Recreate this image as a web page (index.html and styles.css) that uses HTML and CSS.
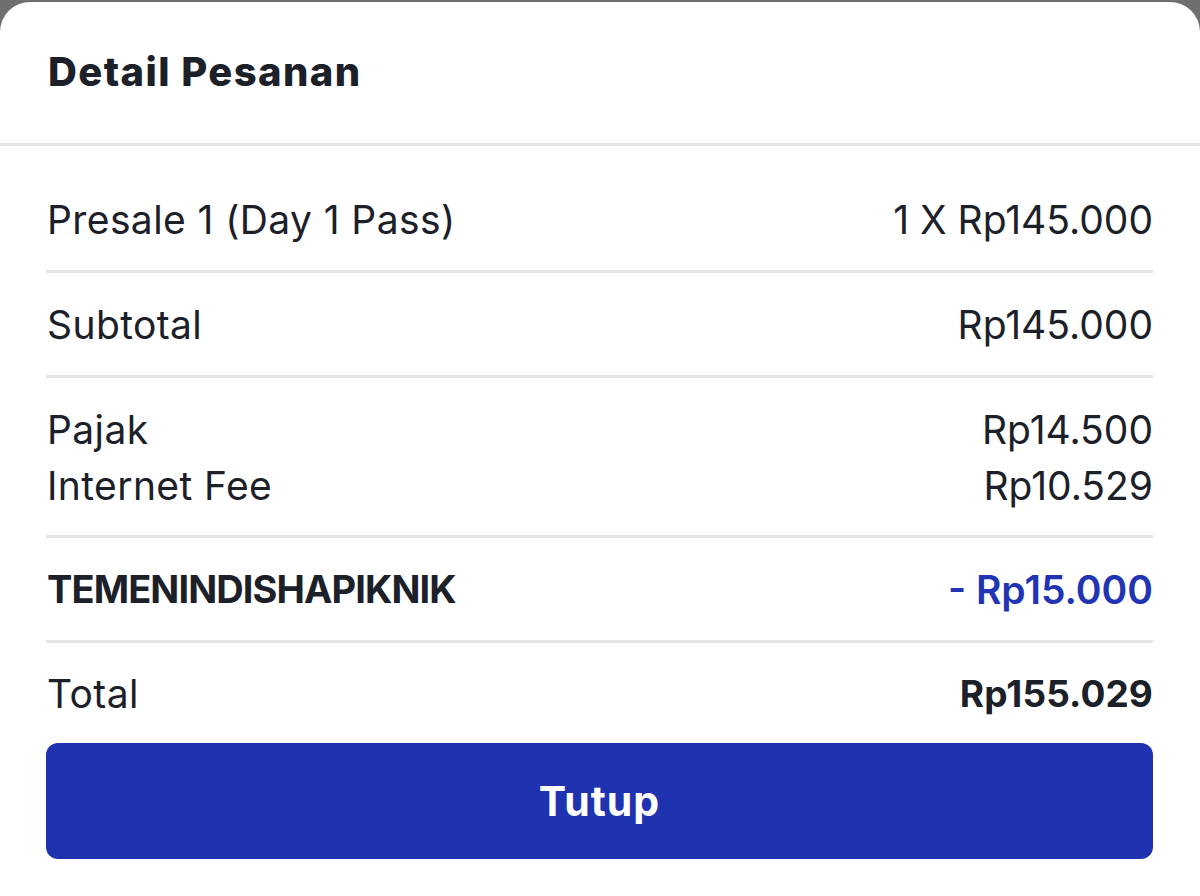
FILE: index.html
```html
<!DOCTYPE html>
<html lang="id">
<head>
<meta charset="utf-8">
<title>Detail Pesanan</title>
<link rel="stylesheet" href="styles.css">
</head>
<body>
<div class="sheet">
  <div class="sheet-header">
    <h1 class="title">Detail Pesanan</h1>
  </div>
  <div class="sheet-body">
    <div class="row">
      <div class="line"><span>Presale 1 (Day 1 Pass)</span><span class="amount">1 X Rp145.000</span></div>
    </div>
    <div class="row">
      <div class="line"><span>Subtotal</span><span class="amount">Rp145.000</span></div>
    </div>
    <div class="row row-fees">
      <div class="line"><span>Pajak</span><span class="amount">Rp14.500</span></div>
      <div class="line"><span>Internet Fee</span><span class="amount">Rp10.529</span></div>
    </div>
    <div class="row">
      <div class="line"><span class="code">TEMENINDISHAPIKNIK</span><span class="amount discount">- Rp15.000</span></div>
    </div>
    <div class="row row-last">
      <div class="line"><span>Total</span><span class="amount total">Rp155.029</span></div>
    </div>
    <button class="btn-close" type="button">Tutup</button>
  </div>
</div>
</body>
</html>
```
FILE: styles.css
```css
html, body {
  margin: 0;
  padding: 0;
}
body {
  background: #6f6f6f;
  font-family: "Inter", "Noto Sans", sans-serif;
  color: #1c2029;
  height: 896px;
  overflow: hidden;
}
.sheet {
  margin-top: 2px;
  background: #ffffff;
  border-radius: 30px 30px 0 0;
  height: 894px;
}
.sheet-header {
  height: 141px;
  display: flex;
  align-items: center;
  padding: 0 48px;
  border-bottom: 3px solid #e4e4e4;
}
.title {
  margin: 0;
  margin-top: -2px;
  font-size: 40px;
  font-weight: 800;
  letter-spacing: 1.4px;
}
.sheet-body {
  padding: 22px 47px 0 46px;
}
.row {
  padding: 23px 0;
  border-bottom: 3px solid #e4e4e4;
}
.row-fees {
  padding-bottom: 22px;
}
.row-last {
  border-bottom: none;
  padding: 22px 0 22px;
}
.line {
  display: flex;
  justify-content: space-between;
  align-items: center;
  height: 56px;
  font-size: 39px;
  letter-spacing: 0.4px;
  padding-left: 1px;
}
.amount {
  letter-spacing: 0;
}
.code {
  font-weight: 700;
  font-size: 38px;
  letter-spacing: -0.9px;
}
.discount {
  color: #2135b3;
  font-weight: 600;
}
.total {
  font-weight: 700;
  font-size: 37px;
  letter-spacing: 0.1px;
}
.btn-close {
  display: block;
  width: 100%;
  height: 116px;
  border: none;
  border-radius: 12px;
  background: #1f32b0;
  color: #ffffff;
  font-family: "Inter", "Noto Sans", sans-serif;
  font-size: 41px;
  font-weight: 700;
  letter-spacing: 1px;
}
```
